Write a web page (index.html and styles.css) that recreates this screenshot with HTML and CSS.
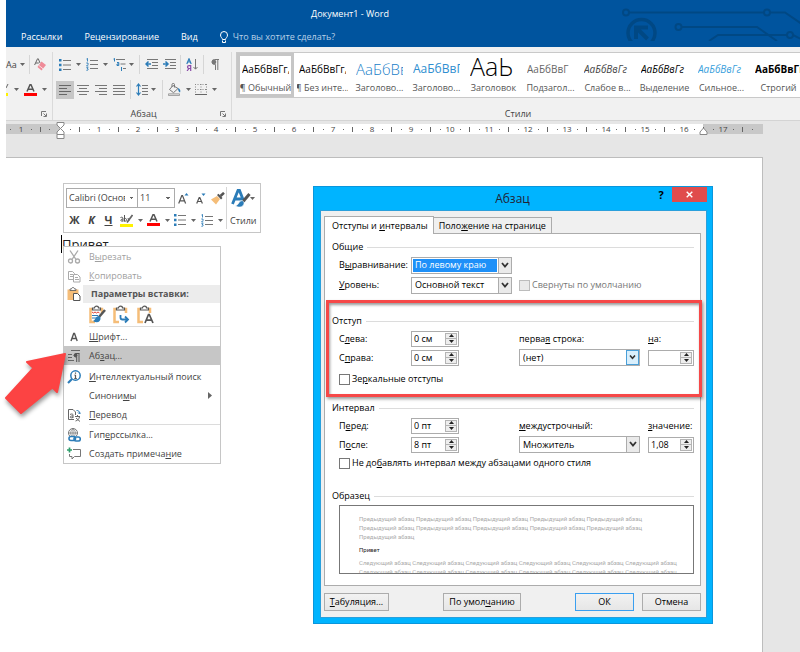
FILE: index.html
```html
<!DOCTYPE html>
<html lang="ru">
<head>
    <meta charset="UTF-8">
    <meta name="viewport" content="width=device-width, initial-scale=1.0">
    <title>Документ1 - Word</title>
    <link rel="stylesheet" href="styles.css">
</head>
<body>
    <!-- Shared icons -->
    <svg class="sprite" aria-hidden="true">
        <symbol id="caret" viewBox="0 0 5 3"><path d="M0 0h5L2.500 3z" fill="#666"/></symbol>
        <symbol id="bullets" viewBox="0 0 12 12">
            <path d="M0 0h2.500v2.500H0zM0 4.800h2.500v2.500H0zM0 9.500h2.500V12H0z" fill="#2b7cb8"/>
            <path d="M4 1.500h8M4 6h8M4 10.500h8" stroke="#777"/>
        </symbol>
        <symbol id="numbers" viewBox="0 0 12 13">
            <path d="M.5 1l1-.7V3.500M.3 5h1.700v1.500L.5 8h1.800M.3 9.700h1.800L1.300 11c1.500 0 1.200 1.500-.9 1.300" fill="none" stroke="#2b7cb8" stroke-width=".9"/>
            <path d="M4 2.500h8M4 6.500h8M4 10.500h8" stroke="#777"/>
        </symbol>
        <symbol id="combo-arrow" viewBox="0 0 8 6"><path d="M1 .5l3 3.500L7 .5" fill="none" stroke="#333" stroke-width="1.800"/></symbol>
        <symbol id="up" viewBox="0 0 5 3"><path d="M0 3h5L2.500 0z" fill="#222"/></symbol>
        <symbol id="down" viewBox="0 0 5 3"><path d="M0 0h5L2.500 3z" fill="#222"/></symbol>
        <symbol id="launcher" viewBox="0 0 6 6"><path d="M.5 5V.5H5M2.500 2.500L5 5M5.500 2.500v3h-3" fill="none" stroke="#777"/></symbol>
        <symbol id="font-color" viewBox="0 0 13 12">
            <path d="M3 7.500L6 .8h1L10 7.500M4.200 5.200h4.600" fill="none" stroke="#555" stroke-width="1.500"/>
            <path d="M0 9h13v3H0z" fill="#f00"/>
        </symbol>
        <symbol id="clipboard" viewBox="0 0 18 19">
            <path d="M4 4H2.500v13H7M12 4h2v4" fill="none" stroke="#f5bd78" stroke-width="2.500"/>
            <path d="M4.500 5V3h2c0-2.500 4-2.500 4 0h2v2z" fill="#fff" stroke="#555" stroke-width="1.200"/>
        </symbol>
    </svg>

    <header class="titlebar">
        <svg class="circuit" width="180" height="41" viewBox="620 0 180 41" fill="none" stroke="#004884" stroke-width="2" aria-hidden="true">
            <circle cx="626" cy="12.500" r="3"/><path d="M629 12.500h135M770 12.500h15l16 11"/><circle cx="767" cy="12.500" r="3"/>
            <circle cx="678.500" cy="27" r="3"/><path d="M682 27h75l20 14M709 41l9-6h69M793 35l8 4"/><circle cx="790" cy="35" r="3"/>
            <circle cx="641.500" cy="33" r="13.500" stroke-width="3.500"/>
            <path d="M636 39V27.500h12M636.500 28l11 11" stroke-width="4"/>
        </svg>
        <h1 class="window-title">Документ1 - Word</h1>
        <nav class="tabs">
            <a href="#">Рассылки</a>
            <a href="#">Рецензирование</a>
            <a href="#">Вид</a>
            <a href="#" class="tell-me">
                <svg width="8" height="12" viewBox="0 0 8 12" fill="none" stroke="#fff"><path d="M2.500 8.500c0-1.500-2-2-2-4.500a3.500 3.500 0 0 1 7 0c0 2.500-2 3-2 4.500zM2.500 9.500v2h3v-2"/></svg>
                Что вы хотите сделать?
            </a>
        </nav>
    </header>

    <section class="ribbon">
        <div class="group group-font">
            <div class="tool-row">
                <button class="tool tool-case">Аа<svg class="caret"><use href="#caret"/></svg></button>
                <span class="divider"></span>
                <button class="tool" aria-label="Очистить формат">
                    <svg width="12" height="13" viewBox="0 0 12 13"><path d="M.6 7L3.500.8h.8L6 5M1.800 5h3" fill="none" stroke="#666"/><path d="M7.500 3.500L12 7l-4.500 5.500L3.500 9z" fill="#ef8b98"/><path d="M5 7.500l4.300 3.500" stroke="#fff" stroke-width=".7"/></svg>
                </button>
            </div>
            <div class="tool-row">
                <button class="tool" aria-label="Цвет выделения">
                    <svg width="3" height="13" viewBox="0 0 3 13"><path d="M0 5l2-4" stroke="#666"/><path d="M0 10h2v3H0z" fill="#fff200"/></svg>
                    <svg class="caret"><use href="#caret"/></svg>
                </button>
                <button class="tool" aria-label="Цвет текста">
                    <svg width="13" height="12"><use href="#font-color"/></svg>
                    <svg class="caret"><use href="#caret"/></svg>
                </button>
            </div>
            <div class="group-label"><button class="launcher" aria-label="Шрифт"><svg width="6" height="6"><use href="#launcher"/></svg></button></div>
        </div>

        <div class="group group-paragraph">
            <div class="tool-row">
                <button class="tool split" aria-label="Маркеры"><svg width="12" height="12"><use href="#bullets"/></svg><svg class="caret"><use href="#caret"/></svg></button>
                <button class="tool split" aria-label="Нумерация"><svg width="12" height="13"><use href="#numbers"/></svg><svg class="caret"><use href="#caret"/></svg></button>
                <button class="tool split tight" aria-label="Многоуровневый список">
                    <svg width="13" height="13" viewBox="0 0 13 13"><path d="M.5 1l1-.7V3.500M4 4.500h1.800V7.500H4V6h1.800M8.500 9v4" fill="none" stroke="#2b7cb8"/><path d="M3 1.500h9M7.500 6h5M10 10.500h3" stroke="#777"/></svg>
                    <svg class="caret"><use href="#caret"/></svg>
                </button>
                <span class="divider"></span>
                <button class="tool" aria-label="Уменьшить отступ">
                    <svg width="13" height="11" viewBox="0 0 13 11"><path d="M2 .5h11M7 3.500h6M7 6.500h6M2 9.500h11" stroke="#777"/><path d="M6 5H1.500M3.500 2.500L1 5l2.500 2.500" fill="none" stroke="#2b7cb8" stroke-width="1.500"/></svg>
                </button>
                <button class="tool" aria-label="Увеличить отступ">
                    <svg width="13" height="11" viewBox="0 0 13 11"><path d="M2 .5h11M7 3.500h6M7 6.500h6M2 9.500h11" stroke="#777"/><path d="M0 5h4.500M2.500 2.500L5 5 2.500 7.500" fill="none" stroke="#2b7cb8" stroke-width="1.500"/></svg>
                </button>
                <span class="divider"></span>
                <button class="tool" aria-label="Сортировка">
                    <svg width="12" height="13" viewBox="0 0 12 13" fill="none"><path d="M.8 6L3 .8 5.200 6M1.500 4h3" stroke="#2b7cb8" stroke-width="1.200"/><path d="M4.700 13V7.700H3c-2 0-2 2.800 0 2.800h1.700M3 10.500L1 13" stroke="#8a4aa8" stroke-width="1.200"/><path d="M9.500 1v10M7.500 9l2 2.200 2-2.200" stroke="#777"/></svg>
                </button>
                <span class="divider"></span>
                <button class="tool" aria-label="Все знаки">
                    <svg width="8" height="11" viewBox="0 0 8 11"><path d="M8 .5H3.500a2.500 2.500 0 0 0 0 5h1V11M6.800.5V11" fill="none" stroke="#777"/><circle cx="3" cy="3" r="2.300" fill="#777"/></svg>
                </button>
            </div>
            <div class="tool-row">
                <button class="tool align selected" aria-label="По левому краю"><svg width="12" height="10" viewBox="0 0 12 10"><path d="M0 .5h12M0 3.500h8M0 6.500h12M0 9.500h8" stroke="#666"/></svg></button>
                <button class="tool align" aria-label="По центру"><svg width="12" height="10" viewBox="0 0 12 10"><path d="M0 .5h12M2 3.500h8M0 6.500h12M2 9.500h8" stroke="#777"/></svg></button>
                <button class="tool align" aria-label="По правому краю"><svg width="12" height="10" viewBox="0 0 12 10"><path d="M0 .5h12M4 3.500h8M0 6.500h12M4 9.500h8" stroke="#777"/></svg></button>
                <button class="tool align" aria-label="По ширине"><svg width="12" height="10" viewBox="0 0 12 10"><path d="M0 .5h12M0 3.500h12M0 6.500h12M0 9.500h12" stroke="#777"/></svg></button>
                <span class="divider"></span>
                <button class="tool split tight" aria-label="Интервал">
                    <svg width="12" height="13" viewBox="0 0 12 13"><path d="M2.500 1v11M.5 3.500l2-2.500 2 2.500M.5 9.500l2 2.500 2-2.500" fill="none" stroke="#2b7cb8" stroke-width="1.200"/><path d="M6 2.500h6M6 5.500h6M6 8.500h6M6 11.500h6" stroke="#777"/></svg>
                    <svg class="caret"><use href="#caret"/></svg>
                </button>
                <span class="divider"></span>
                <button class="tool split" aria-label="Заливка">
                    <svg width="13" height="13" viewBox="0 0 13 13"><path d="M5 2.500L1.500 6.500l4 3.200L10 5.500zM4 4V1.500c0-1.500 2.500-1.500 2.500 0v3" fill="none" stroke="#777"/><path d="M10 5c2 1 3 2.500 2 4.500-1.500-.5-2-2.500-2-4.500z" fill="#2b7cb8"/><path d="M.5 10.800h11v1.700H.5z" fill="#ddd" stroke="#888" stroke-width=".7"/></svg>
                    <svg class="caret"><use href="#caret"/></svg>
                </button>
                <button class="tool split" aria-label="Границы">
                    <svg width="12" height="12" viewBox="0 0 12 12"><path d="M0 .5h12M0 5.500h12M.5 0v10M6 0v10M11.500 0v10" stroke="#888" stroke-dasharray="1 1.500"/><path d="M0 10.500h12" stroke="#666"/></svg>
                    <svg class="caret"><use href="#caret"/></svg>
                </button>
            </div>
            <div class="group-label">Абзац<button class="launcher" aria-label="Параметры абзаца"><svg width="6" height="6"><use href="#launcher"/></svg></button></div>
        </div>

        <div class="group group-styles">
            <div class="gallery">
                <button class="style-item current"><span class="sample">АаБбВвГг,</span><span class="style-name">¶ Обычный</span></button>
                <button class="style-item"><span class="sample">АаБбВвГг,</span><span class="style-name">¶ Без инте...</span></button>
                <button class="style-item"><span class="sample heading-1">АаБбВв</span><span class="style-name">Заголово...</span></button>
                <button class="style-item"><span class="sample heading-2">АаБбВвГ</span><span class="style-name">Заголово...</span></button>
                <button class="style-item"><span class="sample title">АаЬ</span><span class="style-name">Заголовок</span></button>
                <button class="style-item"><span class="sample subtitle">АаБбВвГ</span><span class="style-name">Подзагол...</span></button>
                <button class="style-item"><span class="sample subtle">АаБбВвГг</span><span class="style-name">Слабое в...</span></button>
                <button class="style-item"><span class="sample emphasis">АаБбВвГг</span><span class="style-name">Выделение</span></button>
                <button class="style-item"><span class="sample intense">АаБбВвГг</span><span class="style-name">Сильное...</span></button>
                <button class="style-item"><span class="sample strong">АаБбВвГг,</span><span class="style-name">Строгий</span></button>
            </div>
            <div class="group-label">Стили</div>
        </div>
    </section>

    <main class="workspace">
        <div class="ruler">
            <ol class="ruler-scale">
                <li class="before">1</li>
                <li>1</li><li>2</li><li>3</li><li>4</li><li>5</li><li>6</li><li>7</li><li>8</li><li>9</li>
                <li>10</li><li>11</li><li>12</li><li>13</li><li>14</li><li>15</li><li>16</li><li>17</li><li class="tail"></li>
            </ol>
            <svg class="marker marker-left" width="9" height="18" viewBox="0 0 9 18" fill="#fff" stroke="#888"><path d="M1 .5h7v2.500L4.500 6.500 1 3zM1 12.500V10l3.500-3.500L8 10v2.500zM1 12.500h7v4H1z"/></svg>
            <svg class="marker marker-right" width="9" height="8" viewBox="0 0 9 8" fill="#fff" stroke="#888"><path d="M1 7.500V5l3.500-4L8 5v2.500z"/></svg>
        </div>

        <div class="paper">
            <p class="typed">Привет</p>

            <div class="mini-toolbar">
                <div class="mini-main">
                    <div class="mini-row">
                        <select class="mini-select font-name" aria-label="Шрифт"><option>Calibri (Основной текст)</option></select>
                        <select class="mini-select font-size" aria-label="Размер"><option>11</option></select>
                        <button class="tool mini-size" aria-label="Увеличить размер"><svg width="11" height="11" viewBox="0 0 11 11"><path d="M.7 10.500L3.800 2.500h.7l3.100 8M2 7.800h4.300" fill="none" stroke="#555" stroke-width="1.200"/><path d="M6.500 2.500L8.500 0l2 2.500z" fill="#2b7cb8"/></svg></button>
                        <button class="tool mini-size" aria-label="Уменьшить размер"><svg width="10" height="11" viewBox="0 0 10 11"><path d="M.7 10.500L3.200 4.500h.6l2.600 6M1.800 8.500h3.500" fill="none" stroke="#555" stroke-width="1.200"/><path d="M5.500.5h4l-2 2.500z" fill="#2b7cb8"/></svg></button>
                        <button class="tool mini-size" aria-label="Формат по образцу"><svg width="14" height="13" viewBox="0 0 14 13"><path d="M6 4L0 7.500 5 12.500 9 7z" fill="#f5bd78"/><path d="M6 3l4 4.500 1.500-1.500L7.500 1.800z" fill="#555"/><path d="M9.500 4L13 .8" stroke="#555" stroke-width="2.500"/></svg></button>
                    </div>
                    <div class="mini-row">
                        <button class="tool mini-letter"><b>Ж</b></button>
                        <button class="tool mini-letter"><b><i>К</i></b></button>
                        <button class="tool mini-letter"><b><u>Ч</u></b></button>
                        <button class="tool split" aria-label="Цвет выделения">
                            <svg width="13" height="13" viewBox="0 0 13 13"><path d="M.5 3.500c3-1 2.500 1 2.500 4M3 5C0 5 .2 8 3 6.800M4.500 1v6.500M4.500 5c2-2 3.500 2.500 0 2.200M8 4l1 3" fill="none" stroke="#555"/><path d="M12.500 1L7 8.500" stroke="#666" stroke-width="1.800"/><path d="M0 10h13v3H0z" fill="#fff200"/></svg>
                            <svg class="caret"><use href="#caret"/></svg>
                        </button>
                        <button class="tool split" aria-label="Цвет текста"><svg width="13" height="12"><use href="#font-color"/></svg><svg class="caret"><use href="#caret"/></svg></button>
                        <button class="tool split" aria-label="Маркеры"><svg width="12" height="12"><use href="#bullets"/></svg><svg class="caret"><use href="#caret"/></svg></button>
                        <button class="tool split" aria-label="Нумерация"><svg width="12" height="13"><use href="#numbers"/></svg><svg class="caret"><use href="#caret"/></svg></button>
                    </div>
                </div>
                <button class="mini-styles">
                    <svg width="24" height="20" viewBox="0 0 24 20"><path d="M1.500 15L7 1.500h1.500L13 13M4 10h7" fill="none" stroke="#2b7cb8" stroke-width="2.800"/><path d="M18.500 5L12 12.500" stroke="#555" stroke-width="3"/><path d="M11.500 11.500c-4 0-3 4-7 5.500 4 2.500 9 .5 8.500-3.500z" fill="#2b7cb8" stroke="#fff" stroke-width=".6"/><path d="M19 8h5l-2.500 3z" fill="#666"/></svg>
                    Стили
                </button>
            </div>

            <ul class="context-menu">
                <li><button class="menu-item disabled"><svg class="menu-icon" viewBox="0 0 14 14" fill="none" stroke="#aaa" stroke-width="1.300"><path d="M3 .5l6 9M11 .5l-6 9"/><circle cx="3.500" cy="11" r="2"/><circle cx="10.500" cy="11" r="2"/></svg><span>В<u>ы</u>резать</span></button></li>
                <li><button class="menu-item disabled"><svg class="menu-icon" viewBox="0 0 14 14" fill="#fff" stroke="#aaa"><path d="M1.500 2.500h4l2 2v6h-6zM3 5.500h3M3 7.500h3"/><path d="M6.500 5.500h4l2.500 2.500v5H6.500zM8 8.500h3M8 10.500h4"/></svg><span><u>К</u>опировать</span></button></li>
                <li class="menu-heading"><svg class="menu-icon" viewBox="0 0 14 14"><path d="M.5 2.500h11V13H.5z" fill="#f5bd78"/><path d="M3 3.500V2h1.500C4.500 0 7.500 0 7.500 2H9v1.500z" fill="#fff" stroke="#555" stroke-width=".8"/><path d="M6.500 6.500h4L13 9v4.500H6.500z" fill="#fff" stroke="#555"/></svg><span>Параметры вставки:</span></li>
                <li class="paste-options">
                    <button class="tool" aria-label="Сохранить исходное форматирование"><svg width="18" height="19" viewBox="0 0 18 19"><use href="#clipboard" width="18" height="19"/><path d="M4 7l1.500 1L7 7l1.500 1L10 7l1.500 1" fill="none" stroke="#e04030"/><path d="M4 10.500h6M4 13h4" stroke="#2b7cb8"/><path d="M17 5l-6 7" stroke="#555" stroke-width="2.500"/><path d="M11 11c-4 0-3 4-6 5 4 2.500 8 1 7.500-3.500z" fill="#2b7cb8"/></svg></button>
                    <button class="tool" aria-label="Объединить форматирование"><svg width="18" height="19" viewBox="0 0 18 19"><use href="#clipboard" width="18" height="19"/><path d="M8.500 10v2.500c0 1.500.5 2 2 2h5M13 11.500l3 3-3 3" fill="none" stroke="#2b7cb8" stroke-width="1.800"/></svg></button>
                    <button class="tool" aria-label="Сохранить только текст"><svg width="18" height="19" viewBox="0 0 18 19"><use href="#clipboard" width="18" height="19"/><path d="M9 18l3.500-8.500h.8L17 18M10.200 15.200h5.400" fill="none" stroke="#555" stroke-width="1.700"/></svg></button>
                </li>
                <li class="separated"><button class="menu-item"><svg class="menu-icon" viewBox="0 0 14 14"><path d="M4 11L6.700 3.500h.8L10.200 11M5 8.500h4.200" fill="none" stroke="#555" stroke-width="1.400"/></svg><span><u>Ш</u>рифт...</span></button></li>
                <li><button class="menu-item active"><svg class="menu-icon" viewBox="0 0 14 14"><path d="M4 1.500h9M1 5.500h4M1 8.500h4M1 11.500h6" stroke="#666"/><path d="M12.500 4.500H9a1.800 1.800 0 0 0 0 3.600h.5M9.700 4.500V13M12 4.500V13" fill="none" stroke="#555"/><circle cx="8.500" cy="6.200" r="1.800" fill="#555"/></svg><span>Аб<u>з</u>ац...</span></button></li>
                <li class="spaced"><button class="menu-item"><svg class="menu-icon" viewBox="0 0 14 14" fill="none"><circle cx="8.500" cy="5.500" r="4.700" stroke="#2b7cb8" stroke-width="1.500"/><path d="M5 9L1 13" stroke="#2b7cb8" stroke-width="2.200"/><path d="M8.500 5v3.500M8.500 2.500v1.300M7.300 8.500h2.500M7.500 5.200h1" stroke="#555" stroke-width="1.200"/></svg><span><u>И</u>нтеллектуальный поиск</span></button></li>
                <li><button class="menu-item"><span class="menu-icon"></span><span>Синони<u>м</u>ы</span><svg class="submenu" width="4" height="7" viewBox="0 0 4 7"><path d="M0 0l4 3.500L0 7z" fill="#666"/></svg></button></li>
                <li><button class="menu-item"><svg class="menu-icon" viewBox="0 0 14 14" fill="none" stroke="#666"><path d="M7 11.500H1.500V1.500H6L8.500 4v3"/><path d="M3 6.500c2-1 3-.5 3 .5v3M6 8c-4-.5-3.500 3 0 1.500"/><path d="M8 8.500h5M10.500 7v1.500M8.500 13c2-.5 3.500-2 4-4M9 10l4 3.500"/><path d="M9.500 2.500c2 0 3 .5 3 3M11 4.500l1.500 1.500L14 4.500" stroke="#2b7cb8"/></svg><span><u>П</u>еревод</span></button></li>
                <li class="separated"><button class="menu-item"><svg class="menu-icon" viewBox="0 0 14 14" fill="none"><circle cx="6" cy="5" r="4.500" stroke="#777"/><path d="M1.500 5h9M6 .5v9M6 .5c-3 2-3 7 0 9M6 .5c3 2 3 7 0 9" stroke="#777" stroke-width=".8"/><path d="M2 8h12v6H2z" fill="#fff"/><rect x="2" y="8.500" width="6.500" height="4" rx="2" stroke="#2b7cb8" stroke-width="1.600"/><rect x="7" y="9" width="6.300" height="4" rx="2" stroke="#2b7cb8" stroke-width="1.600"/></svg><span>Гип<u>е</u>рссылка...</span></button></li>
                <li><button class="menu-item"><svg class="menu-icon" viewBox="0 0 14 14" fill="none"><path d="M6 2.500h7.500v7H7.500L5 12V9.500H2.500V7" stroke="#777"/><path d="M2.500.5v5M0 3h5" stroke="#2e9e6b" stroke-width="1.700"/></svg><span>Создать примеча<u>н</u>ие</span></button></li>
            </ul>

            <svg class="pointer" width="72" height="76" viewBox="0 348 72 76" aria-hidden="true">
                <path d="M65 354L27 362l6.500 6L6 398l15 15 31.500-25.500L57 392z" fill="#fc4343" stroke="#fc4343" stroke-width="2" stroke-linejoin="round"/>
            </svg>

            <form class="dialog" onsubmit="return false">
                <header class="dialog-title">
                    <h2>Абзац</h2>
                    <button class="help" type="button" aria-label="Справка">?</button>
                    <button class="close" type="button" aria-label="Закрыть"><svg width="7" height="7" viewBox="0 0 7 7"><path d="M.7.7l5.600 5.600M6.300.7L.7 6.300" stroke="#fff" stroke-width="1.400"/></svg></button>
                </header>
                <div class="dialog-body">
                    <div class="dialog-tabs">
                        <button class="dialog-tab open" type="button">Отступы и <u>и</u>нтервалы</button>
                        <button class="dialog-tab" type="button">Поло<u>ж</u>ение на странице</button>
                    </div>
                    <div class="panel">
                        <section class="block">
                            <h3>Общие</h3>
                            <div class="field-row tall">
                                <label for="align">В<u>ы</u>равнивание:</label>
                                <div class="combo focused"><select id="align"><option>По левому краю</option></select><svg class="combo-arrow"><use href="#combo-arrow"/></svg></div>
                            </div>
                            <div class="field-row tall">
                                <label for="level"><u>У</u>ровень:</label>
                                <div class="combo"><select id="level"><option>Основной текст</option></select><svg class="combo-arrow"><use href="#combo-arrow"/></svg></div>
                                <label class="check off"><input type="checkbox" disabled>Свернуты по умолчанию</label>
                            </div>
                        </section>

                        <section class="block highlighted">
                            <h3>Отступ</h3>
                            <div class="field-row">
                                <label for="left">С<u>л</u>ева:</label>
                                <div class="spinner"><input id="left" type="text" value="0 см"><span class="steps"><button type="button" aria-label="Больше"><svg><use href="#up"/></svg></button><button type="button" aria-label="Меньше"><svg><use href="#down"/></svg></button></span></div>
                                <label for="first">перва<u>я</u> строка:</label>
                                <label for="by"><u>н</u>а:</label>
                            </div>
                            <div class="field-row">
                                <label for="right">С<u>п</u>рава:</label>
                                <div class="spinner"><input id="right" type="text" value="0 см"><span class="steps"><button type="button" aria-label="Больше"><svg><use href="#up"/></svg></button><button type="button" aria-label="Меньше"><svg><use href="#down"/></svg></button></span></div>
                                <div class="combo wide hot"><select id="first"><option>(нет)</option></select><svg class="combo-arrow"><use href="#combo-arrow"/></svg></div>
                                <div class="spinner"><input id="by" type="text" value=""><span class="steps"><button type="button" aria-label="Больше"><svg><use href="#up"/></svg></button><button type="button" aria-label="Меньше"><svg><use href="#down"/></svg></button></span></div>
                            </div>
                            <label class="check mirror"><input type="checkbox"><span>Зе<u>р</u>кальные отступы</span></label>
                        </section>

                        <section class="block">
                            <h3>Интервал</h3>
                            <div class="field-row">
                                <label for="before">П<u>е</u>ред:</label>
                                <div class="spinner"><input id="before" type="text" value="0 пт"><span class="steps"><button type="button" aria-label="Больше"><svg><use href="#up"/></svg></button><button type="button" aria-label="Меньше"><svg><use href="#down"/></svg></button></span></div>
                                <label for="spacing"><u>м</u>еждустрочный:</label>
                                <label for="value"><u>з</u>начение:</label>
                            </div>
                            <div class="field-row">
                                <label for="after">П<u>о</u>сле:</label>
                                <div class="spinner"><input id="after" type="text" value="8 пт"><span class="steps"><button type="button" aria-label="Больше"><svg><use href="#up"/></svg></button><button type="button" aria-label="Меньше"><svg><use href="#down"/></svg></button></span></div>
                                <div class="combo wide"><select id="spacing"><option>Множитель</option></select><svg class="combo-arrow"><use href="#combo-arrow"/></svg></div>
                                <div class="spinner"><input id="value" type="text" value="1,08"><span class="steps"><button type="button" aria-label="Больше"><svg><use href="#up"/></svg></button><button type="button" aria-label="Меньше"><svg><use href="#down"/></svg></button></span></div>
                            </div>
                            <label class="check"><input type="checkbox"><span>Не до<u>б</u>авлять интервал между абзацами одного стиля</span></label>
                        </section>

                        <section class="block">
                            <h3>Образец</h3>
                            <div class="preview">
                                <p>Предыдущий абзац Предыдущий абзац Предыдущий абзац Предыдущий абзац Предыдущий абзац<br>Предыдущий абзац Предыдущий абзац Предыдущий абзац Предыдущий абзац Предыдущий абзац<br>Предыдущий абзац</p>
                                <p class="preview-current">Привет</p>
                                <p>Следующий абзац Следующий абзац Следующий абзац Следующий абзац Следующий абзац Следующий абзац<br>Следующий абзац Следующий абзац Следующий абзац Следующий абзац Следующий абзац Следующий абзац</p>
                            </div>
                        </section>
                    </div>
                    <footer class="dialog-actions">
                        <button class="action" type="button"><u>Т</u>абуляция...</button>
                        <button class="action defaults" type="button">По умол<u>ч</u>анию</button>
                        <button class="action primary" type="button">ОК</button>
                        <button class="action" type="button">Отмена</button>
                    </footer>
                </div>
            </form>
        </div>
    </main>
</body>
</html>
```
FILE: styles.css
```css
/* Base */
* {
    margin: 0;
    padding: 0;
    box-sizing: border-box;
}

body {
    font-family: 'Open Sans', 'Noto Sans', sans-serif;
    font-size: 9px;
    line-height: 12px;
    color: #444;
    background: #fff;
    min-height: 100vh;
    padding-left: 6px;
    display: flex;
    flex-direction: column;
    overflow: hidden;
}

button, input, select {
    font: inherit;
    color: inherit;
    border: 0;
    background: none;
}

svg { flex: none; display: block; }
a { color: inherit; text-decoration: none; }
ul, ol { list-style: none; }
.sprite { position: absolute; width: 0; height: 0; }
.caret { width: 5px; height: 3px; }

/* Title bar */
.titlebar {
    position: relative;
    height: 47px;
    background: #00549e;
    color: #fff;
}

.circuit {
    position: absolute;
    top: 0;
    right: 0;
}

.window-title {
    font-size: 9px;
    font-weight: 500;
    line-height: 28px;
    text-align: center;
    padding-right: 106px;
}

.tabs {
    display: flex;
    gap: 22px;
    padding-left: 15px;
    line-height: 18px;
    font-weight: 500;
}

.tell-me {
    display: flex;
    align-items: center;
    gap: 5px;
    font-weight: 400;
    color: #b8d0e6;
}

/* Ribbon */
.ribbon {
    display: flex;
    height: 74px;
    background: #f1f1f1;
    border-bottom: 1px solid #d4d4d4;
    padding-top: 5px;
}

.group {
    display: flex;
    flex-direction: column;
    border-right: 1px solid #dadada;
}

.group-font { width: 47px; }
.group-paragraph { width: 179px; padding-left: 3px; }
.group-styles { flex: 1; min-width: 0; border: 0; padding-left: 4px; }

.tool-row {
    display: flex;
    align-items: center;
    height: 25px;
}

.tool {
    display: flex;
    align-items: center;
    justify-content: center;
    gap: 5px;
}

.split {
    width: 27px;
    justify-content: flex-start;
    padding-left: 3px;
    gap: 5px;
}

.tight { gap: 3px; }

.divider {
    width: 1px;
    height: 19px;
    background: #d6d6d6;
}

.group-font .tool-row { justify-content: space-between; padding-right: 6px; }
.group-font .tool-row:nth-child(2) { justify-content: flex-start; gap: 5px; }
.tool-case { gap: 3px; }

.group-paragraph .tool-row:first-child .tool:not(.split) { width: 18px; }
.group-paragraph .divider { margin: 0 2px; }

.align { width: 18px; height: 18px; }
.align.selected { background: #c6c6c6; }

.group-label {
    display: flex;
    justify-content: center;
    position: relative;
    margin-top: auto;
}

.launcher {
    position: absolute;
    right: 5px;
    bottom: 3px;
}

.group-font .launcher { bottom: 3px; }

/* Style gallery */
.gallery {
    display: flex;
    height: 46px;
    background: #fff;
    border: solid #c9c9c9;
    border-width: 1px 0 1px 1px;
    overflow: hidden;
}

.style-item {
    flex: none;
    width: 57px;
    display: flex;
    flex-direction: column;
    align-items: center;
    border: 3px solid transparent;
    overflow: hidden;
    white-space: nowrap;
}

.style-item.current { border-color: #c6c6c6; }

.sample {
    width: 47px;
    height: 26px;
    line-height: 26px;
    font-size: 10px;
    font-weight: 500;
    text-align: left;
    color: #000;
    overflow: hidden;
}

.style-name { color: #555; }
.heading-1 { font-size: 15px; font-weight: 300; color: #2080c8; }
.heading-2 { font-size: 12px; font-weight: 400; color: #2e8ed0; }
.title { font-size: 25px; font-weight: 300; line-height: 20px; }
.subtitle { color: #666; }
.subtle, .emphasis, .intense { font-style: italic; }
.subtle { color: #444; }
.intense { color: #38a0dc; }
.strong { font-weight: 700; }

/* Workspace and ruler */
.workspace {
    flex: 1;
    display: flex;
    flex-direction: column;
    background: #e6e6e6;
}

.ruler {
    position: relative;
    margin: 3px 37px 23px 0;
}

.ruler-scale {
    display: flex;
    height: 10px;
    overflow: hidden;
    font-size: 8px;
    line-height: 10px;
    background: linear-gradient(to right, #c8c8c8 54px, #fff 54px, #fff 697px, #c8c8c8 697px);
}

.ruler-scale li {
    flex: none;
    width: 39px;
    padding-left: 29px;
    text-align: center;
    background:
        linear-gradient(#666, #666) 5px 5px / 1px 1px no-repeat,
        linear-gradient(#666, #666) 14px 3px / 1px 5px no-repeat,
        linear-gradient(#666, #666) 24px 5px / 1px 1px no-repeat;
}

.ruler-scale .before {
    width: 59px;
    padding: 0 39px 0 10px;
    background:
        linear-gradient(#666, #666) 4px 5px / 1px 1px no-repeat,
        linear-gradient(#666, #666) 25px 5px / 1px 1px no-repeat,
        linear-gradient(#666, #666) 34px 3px / 1px 5px no-repeat,
        linear-gradient(#666, #666) 43px 5px / 1px 1px no-repeat;
}

.ruler-scale .tail { width: 28px; }

.marker { position: absolute; }
.marker-left { left: 50px; top: -2px; }
.marker-right { left: 693px; top: 3px; }

.paper {
    position: relative;
    flex: 1;
    margin-right: 37px;
    background: #fff;
    border: solid #bdbdbd;
    border-width: 1px 1px 0 0;
}

/* Everything below floats over the page */
.typed {
    position: absolute;
    left: 55px;
    top: 77px;
    border-left: 1px solid #000;
    font-size: 13px;
    line-height: 18px;
    color: #222;
}

.mini-toolbar {
    position: absolute;
    left: 57px;
    top: 25px;
    display: flex;
    height: 50px;
    background: #fff;
    border: 1px solid #c6c6c6;
    padding: 3px 3px 3px 2px;
}

.mini-main { border-right: 1px solid #d6d6d6; }
.mini-row { display: flex; align-items: center; height: 22px; }

.mini-select {
    appearance: none;
    height: 20px;
    border: 1px solid #ababab;
    padding: 0 12px 0 2px;
    background:
        linear-gradient(45deg, transparent 50%, #666 50%) right 6px center / 2px 2px no-repeat,
        linear-gradient(-45deg, transparent 50%, #666 50%) right 4px center / 2px 2px no-repeat;
}

.font-name { width: 72px; }
.font-size { width: 37px; border-left: 0; }
.mini-size { width: 17px; }
.mini-letter { width: 17px; font-size: 11px; }

.mini-styles {
    display: flex;
    flex-direction: column;
    align-items: center;
    justify-content: space-between;
    padding: 2px 0 2px 3px;
}

.context-menu {
    position: absolute;
    left: 57px;
    top: 88px;
    width: 158px;
    background: #fff;
    border: 1px solid #c6c6c6;
}

.menu-item {
    display: flex;
    align-items: center;
    gap: 8px;
    width: 100%;
    height: 19px;
    padding-left: 3px;
    text-align: left;
    white-space: nowrap;
}

.menu-icon { width: 14px; height: 14px; flex: none; }
.menu-item.disabled { color: #a0a0a0; }
.menu-item.active { background: #c6c6c6; }
.submenu { margin-left: auto; margin-right: 8px; }

.menu-heading {
    display: flex;
    align-items: center;
    gap: 2px;
    padding-left: 3px;
    font-weight: 700;
    color: #555;
}

.menu-heading span {
    flex: 1;
    background: #ececec;
    padding-left: 8px;
    line-height: 18px;
}

.paste-options {
    display: flex;
    gap: 6px;
    padding: 2px 0 2px 24px;
}

.separated {
    background: linear-gradient(#dcdcdc, #dcdcdc) 25px 0 / 100% 1px no-repeat;
    padding-top: 1px;
}

.spaced { padding-top: 2px; }

.pointer {
    position: absolute;
    left: -6px;
    top: 190px;
    filter: drop-shadow(1px 3px 2px rgba(0, 0, 0, 0.4));
}

/* Paragraph dialog */
.dialog {
    position: absolute;
    left: 307px;
    top: 28px;
    width: 400px;
    background: #00b4ff;
    border: 1px solid #0a96dc;
    padding: 0 5px 5px 6px;
    color: #000;
}

.dialog-title {
    display: flex;
    align-items: flex-start;
    height: 23px;
}

.dialog-title h2 {
    flex: 1;
    padding-left: 50px;
    text-align: center;
    font-size: 12px;
    font-weight: 400;
    line-height: 24px;
    color: #223;
}

.help {
    width: 12px;
    margin-right: 5px;
    font-size: 11px;
    font-weight: 700;
    line-height: 16px;
}

.close {
    display: flex;
    align-items: center;
    justify-content: center;
    width: 35px;
    height: 15px;
    background: #e04c4c;
}

.dialog-body {
    background: #f0f0f0;
    border: 1px solid #2aa0dc;
    padding: 5px 5px 6px 3px;
}

.dialog-tabs { display: flex; align-items: flex-end; }

.dialog-tab {
    height: 16px;
    padding: 0 5px;
    border: 1px solid #acacac;
    border-bottom: 0;
    border-left: 0;
    background: #f0f0f0;
    font-weight: 500;
}

.dialog-tab.open {
    height: 18px;
    margin-bottom: -1px;
    padding: 0 5px 0 7px;
    border-left: 1px solid #acacac;
    background: #fff;
    font-weight: 400;
}

.panel {
    background: #fff;
    border: 1px solid #acacac;
    padding: 5px 6px 11px 7px;
}

.block { position: relative; }

.block h3 {
    display: flex;
    align-items: center;
    gap: 4px;
    font-size: inherit;
    font-weight: 400;
    line-height: 16px;
}

.block h3::after {
    content: "";
    flex: 1;
    height: 1px;
    background: #dcdcdc;
}

.field-row {
    display: grid;
    grid-template-columns: 72px 108px 1fr 46px;
    align-items: center;
    height: 19px;
    padding-left: 7px;
}

.field-row.tall { height: 20px; }

.combo {
    display: flex;
    position: relative;
    width: 101px;
    height: 17px;
    border: 1px solid #acacac;
    background: #fff;
}

.combo.wide { width: auto; margin-right: 8px; }

.combo select {
    appearance: none;
    width: 100%;
    padding: 0 13px 0 3px;
    outline: 0;
}

/* The arrow button drawn over the right end of the list */
.combo-arrow {
    position: absolute;
    right: 0;
    top: 0;
    width: 13px;
    height: 15px;
    padding: 4px 2px;
    background: #eaeaea;
    border-left: 1px solid #acacac;
    pointer-events: none;
}

.combo.hot .combo-arrow {
    background: #d9effc;
    border: 1px solid #4a9fd8;
}

.combo.focused select {
    margin: 1px 14px 1px 1px;
    padding: 0 0 0 2px;
    background: #1e90f8;
    color: #fff;
}

.spinner {
    display: flex;
    width: 48px;
    height: 16px;
    border: 1px solid #acacac;
    background: #fff;
}

.field-row .spinner:last-child { width: 46px; }

.spinner input {
    flex: 1;
    min-width: 0;
    padding-left: 2px;
    outline: 0;
}

.steps {
    display: flex;
    flex-direction: column;
    width: 13px;
    padding: 1px 1px 1px 0;
}

.steps button {
    flex: 1;
    display: flex;
    align-items: center;
    justify-content: center;
    background: #eee;
    border: 1px solid #b4b4b4;
}

.steps button + button { border-top: 0; }
.steps svg { width: 5px; height: 3px; }

.check {
    display: flex;
    align-items: center;
    gap: 2px;
    height: 18px;
    padding-left: 7px;
    white-space: nowrap;
}

.field-row .check { padding-left: 0; grid-column: 3 / 5; }

.check input {
    appearance: none;
    width: 11px;
    height: 11px;
    border: 1px solid #777;
    background: #fff;
}

.check.off { color: #777; }
.check.off input { border-color: #bcbcbc; background: #e9e9e9; }

.highlighted { padding: 18px 0 12px; }
.highlighted .mirror { margin-top: 3px; }

/* Red frame around the indent settings */
.highlighted::after {
    content: "";
    position: absolute;
    inset: 5px -8px 3px -6px;
    border: 3px solid #f64848;
    box-shadow: 1px 2px 3px rgba(0, 0, 0, 0.4), inset 1px 2px 3px rgba(0, 0, 0, 0.4);
    pointer-events: none;
}

.preview {
    height: 69px;
    margin: 1px 0 0 7px;
    padding: 8px 0 0 19px;
    border: 1px solid #777;
    overflow: hidden;
    font-family: Roboto, 'Open Sans', sans-serif;
    font-size: 6px;
    line-height: 9px;
    color: #aaa;
    white-space: nowrap;
}

.block:last-child { margin-top: 16px; }
.preview .preview-current { margin: 4px 0; color: #222; }

.dialog-actions {
    display: flex;
    gap: 8px;
    padding-top: 7px;
}

.action {
    width: 59px;
    height: 18px;
    border: 1px solid #acacac;
    background: linear-gradient(#f2f2f2, #e6e6e6);
}

.action:first-child { width: 65px; }
.action.defaults { width: 78px; margin: 0 auto; }
.action.primary { border-color: #3a9ff0; }
```
